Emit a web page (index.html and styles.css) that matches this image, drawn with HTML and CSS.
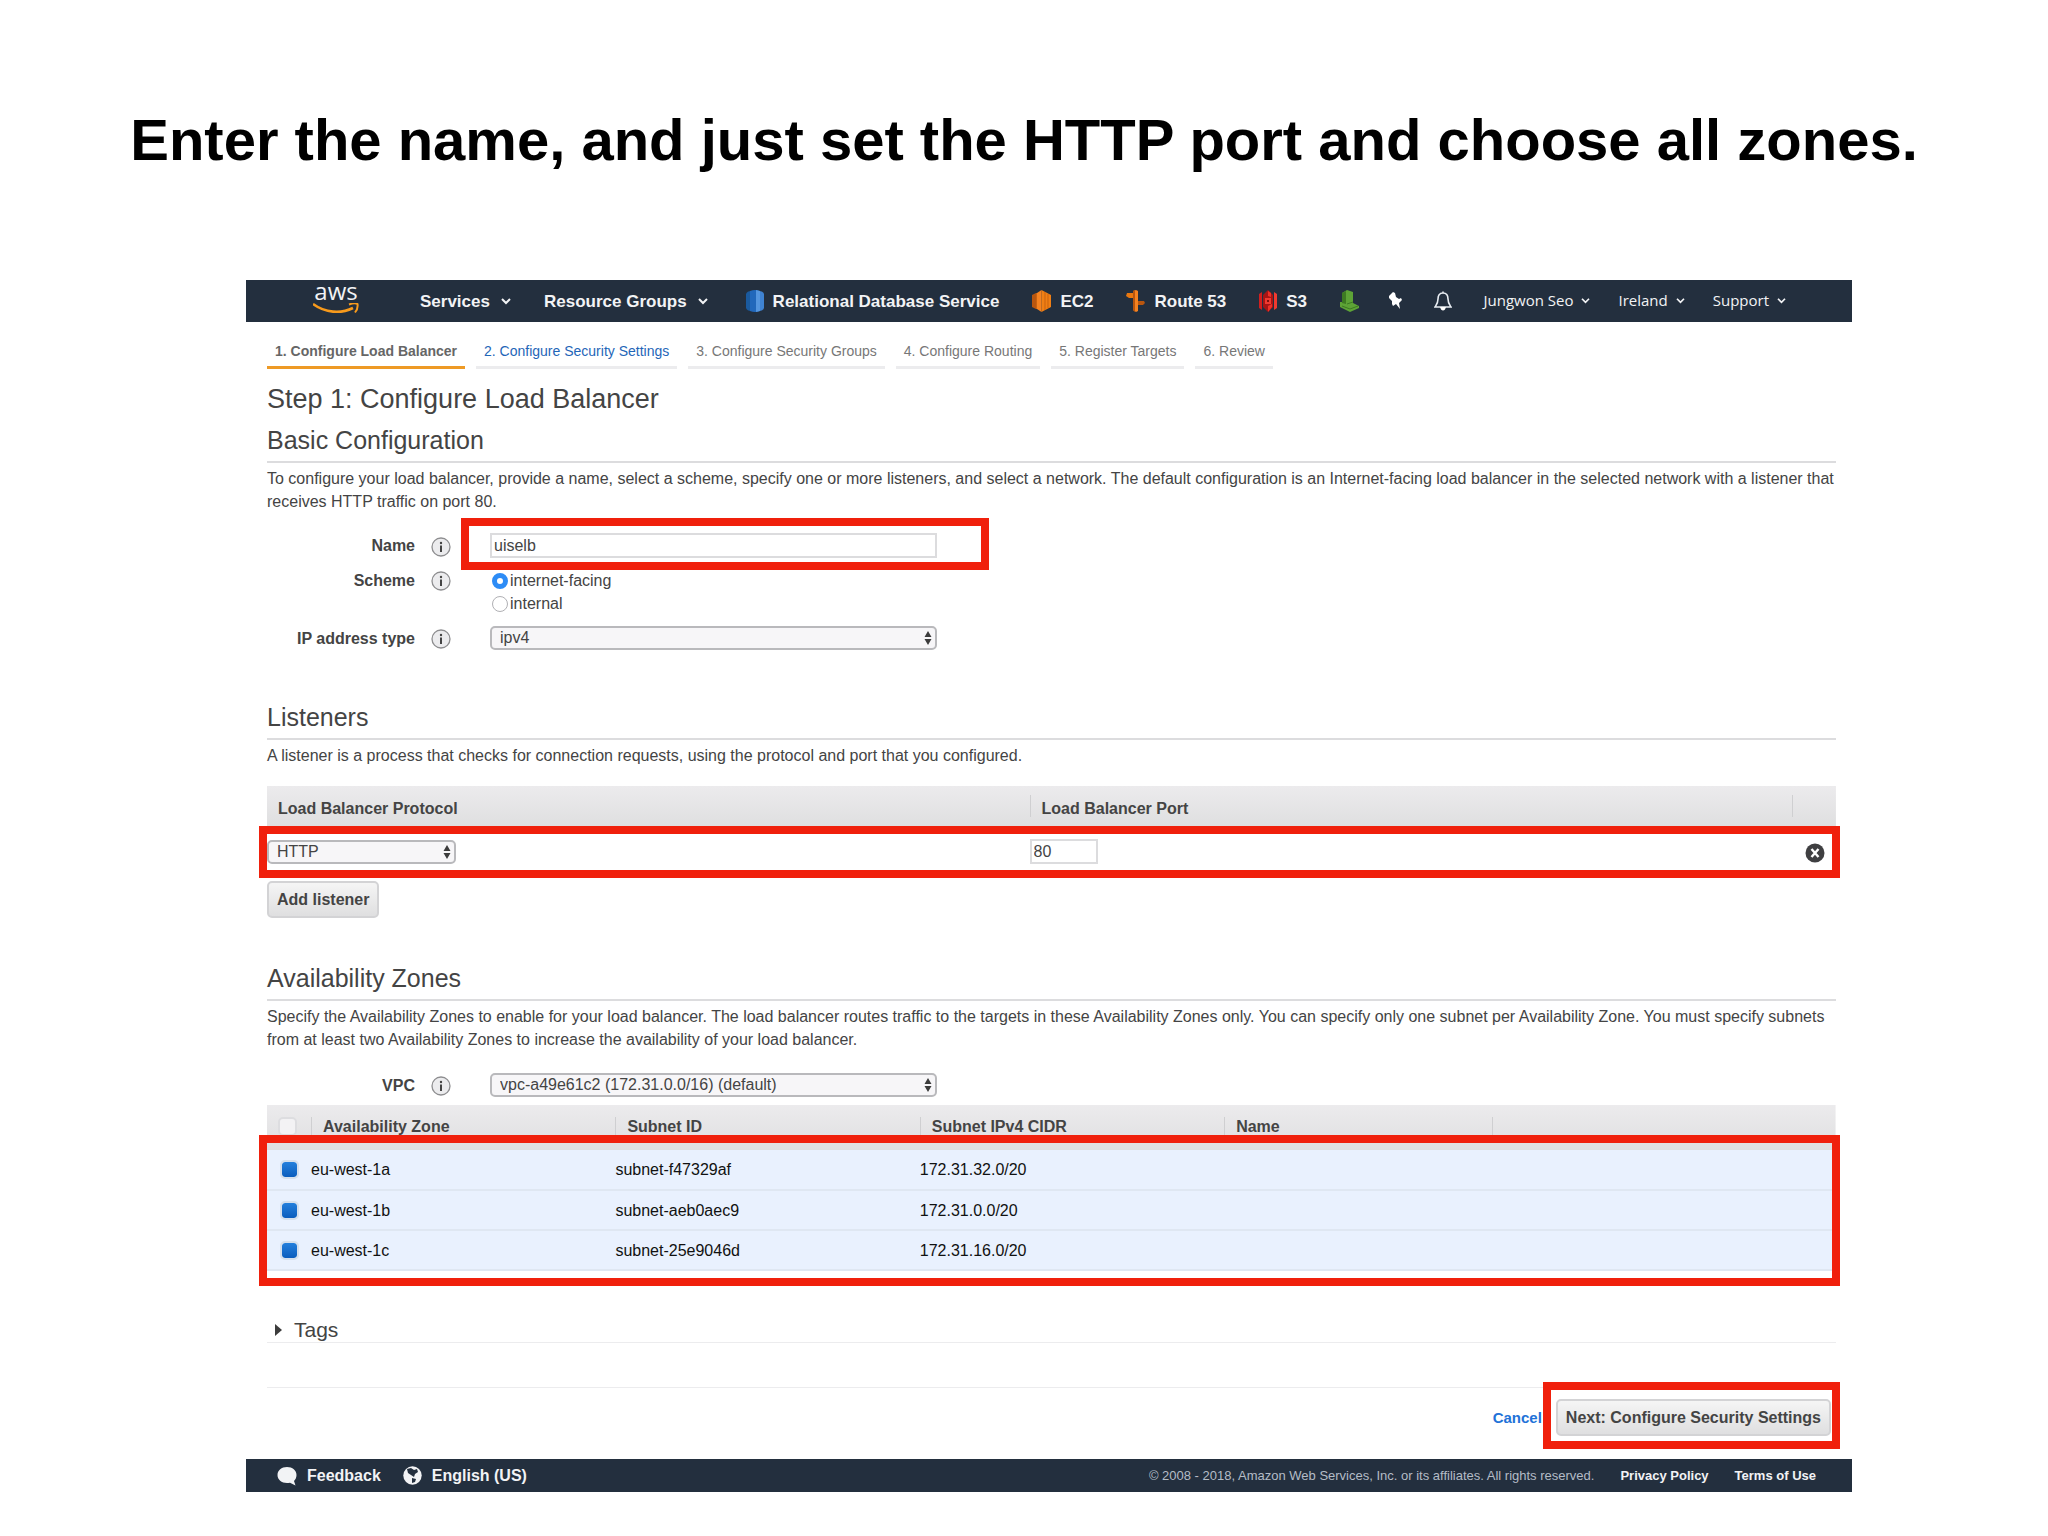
FILE: index.html
```
<!DOCTYPE html>
<html lang="en">
<head>
<meta charset="utf-8">
<title>Configure Load Balancer</title>
<link rel="stylesheet" href="styles.css">
</head>
<body>
<svg class="defs" width="0" height="0" aria-hidden="true">
  <symbol id="chevron" viewBox="0 0 10 8"><path d="M1 2 L5 6 L9 2" fill="none" stroke="currentColor" stroke-width="2"/></symbol>
  <symbol id="updown" viewBox="0 0 8 16"><path d="M4 1 L7.500 7 H.5 Z M4 15 L.5 9 H7.500 Z" fill="#3c3c3c"/></symbol>
  <symbol id="info" viewBox="0 0 20 20"><circle cx="10" cy="10" r="9" fill="#ececee" stroke="#8e8e90" stroke-width="1.300"/><circle cx="10" cy="6" r="1.200" fill="#444"/><path d="M10 8.500 V15" stroke="#444" stroke-width="2"/></symbol>
</svg>

<main class="slide">
  <h1 class="slide-title">Enter the name, and just set the HTTP port and choose all zones.</h1>

  <div class="console">
    <nav class="topbar">
      <a class="logo" href="#"><span class="logo-text">aws</span>
        <svg width="46" height="12" viewBox="0 0 46 12"><path d="M0 1 C12 10 28 11 40 5" fill="none" stroke="#f79a1c" stroke-width="2.600"/><path d="M36 1.500 C40 0 43 0 44.500 1 C45 4 44 7 42 9.500" fill="none" stroke="#f79a1c" stroke-width="2"/></svg>
      </a>
      <div class="menus">
        <a class="menu" href="#">Services <svg class="chev"><use href="#chevron"/></svg></a>
        <a class="menu" href="#">Resource Groups <svg class="chev"><use href="#chevron"/></svg></a>
      </div>
      <div class="shortcuts">
        <a class="shortcut" href="#">
          <svg width="18" height="22" viewBox="0 0 18 22"><path d="M0 4 Q1 1 5 1 V21 Q1 21 0 18 Z" fill="#1a5a9e"/><path d="M18 4 Q17 1 13 1 V21 Q17 21 18 18 Z" fill="#3f83d2"/><path d="M4 1 Q9 -1 14 1 V21 Q9 23 4 21 Z" fill="#2268bb"/><path d="M10 0 L14 1 V21 L10 22 Z" fill="#5596df"/></svg>
          Relational Database Service</a>
        <a class="shortcut" href="#">
          <svg width="19" height="22" viewBox="0 0 19 22"><path d="M0 5 L4 3 V19 L0 17 Z" fill="#b8560f"/><path d="M5 3 L9.500 0 V22 L5 19 Z" fill="#f58220"/><path d="M9.500 0 L19 5 V17 L9.500 22 Z" fill="#f07f14"/><path d="M4.500 3 V19 M13 2 V20 M16 4 V18" stroke="#c9620f"/></svg>
          EC2</a>
        <a class="shortcut" href="#">
          <svg width="19" height="22" viewBox="0 0 19 22"><path d="M7 1 L10 0 L12 1 V21 L10 22 L7 20 Z" fill="#f58220"/><path d="M7 1 L9 0 V22 L7 20 Z" fill="#b8560f"/><path d="M1 3 H7 V8 H3 L0 6 Z" fill="#e8770f"/><path d="M12 11 H18 L19 13 L17 15 H12 Z" fill="#b8560f"/></svg>
          Route 53</a>
        <a class="shortcut" href="#">
          <svg width="18" height="22" viewBox="0 0 18 22"><path d="M0 4 L3 2 V20 L0 18 Z" fill="#d01f1f"/><path d="M18 4 L15 2 V20 L18 18 Z" fill="#f03a30"/><path d="M4 5 L9 0 L14 5 V17 L9 22 L4 17 Z" fill="#a81414"/><path d="M9 1 L12 3 V7 L9 6 Z" fill="#ee3128"/><path d="M6 8 H12 V14 H6 Z" fill="#f03a30"/><path d="M8 10 H10 V12 H8 Z" fill="#7d0f0f"/><path d="M9 16 L13 14 V17 L9 22 Z" fill="#ee3128"/></svg>
          S3</a>
        <a class="shortcut" href="#" aria-label="Service">
          <svg width="19" height="22" viewBox="0 0 19 22"><path d="M2 3 L7 0 L13 2 V13 L19 16 V18 L10 22 L0 17 V12 L2 12 Z" fill="#5da336"/><path d="M2 3 L6 1 V14 L2 13 Z" fill="#3d7a22"/><path d="M7 14 L13 12 M2 16 L10 19 L18 16" stroke="#3d7a22" fill="none"/></svg>
        </a>
      </div>
      <a class="pin" href="#" aria-label="Pin"><svg width="14" height="18" viewBox="0 0 14 18"><path d="M1 4 L5 0 L7 1 L8 5 L11 7 L13 6 L14 8 L11 11 L12 17 L8 12 L5 14 L4 12 L4 9 L1 6 Z" fill="#fff"/></svg></a>
      <a class="bell" href="#" aria-label="Notifications"><svg width="18" height="20" viewBox="0 0 18 20"><path d="M9 0.500 V2 M9 2 C5 2 4 5 4 8 C4 12 3 13 1 16 H17 C15 13 14 12 14 8 C14 5 13 2 9 2 Z" fill="none" stroke="#e8edf2" stroke-width="1.600"/><path d="M6 16 H12 Q11 19.500 9 19.500 Q7 19.500 6 16 Z" fill="#fff"/></svg></a>
      <div class="account">
        <a class="account-link" href="#">Jungwon Seo <svg class="chev-small"><use href="#chevron"/></svg></a>
        <a class="account-link" href="#">Ireland <svg class="chev-small"><use href="#chevron"/></svg></a>
        <a class="account-link" href="#">Support <svg class="chev-small"><use href="#chevron"/></svg></a>
      </div>
    </nav>

    <div class="content">
      <ol class="tabs">
        <li class="tab tab-active">1. Configure Load Balancer</li>
        <li class="tab"><a href="#">2. Configure Security Settings</a></li>
        <li class="tab">3. Configure Security Groups</li>
        <li class="tab">4. Configure Routing</li>
        <li class="tab">5. Register Targets</li>
        <li class="tab">6. Review</li>
      </ol>

      <h2 class="step-title">Step 1: Configure Load Balancer</h2>

      <section class="basic">
        <h3 class="section-title">Basic Configuration</h3>
        <p class="text">To configure your load balancer, provide a name, select a scheme, specify one or more listeners, and select a network. The default configuration is an Internet-facing load balancer in the selected network with a listener that<br>receives HTTP traffic on port 80.</p>
        <div class="form">
          <div class="row">
            <label class="label" for="name">Name</label>
            <svg class="info"><use href="#info"/></svg>
            <input class="input input-name" id="name" type="text" value="uiselb">
            <span class="mark mark-name"></span>
          </div>
          <div class="row row-top">
            <span class="label" id="scheme">Scheme</span>
            <svg class="info"><use href="#info"/></svg>
            <div class="radios" role="radiogroup" aria-labelledby="scheme">
              <label class="radio-label"><input class="radio" type="radio" name="scheme" checked>internet-facing</label>
              <label class="radio-label"><input class="radio" type="radio" name="scheme">internal</label>
            </div>
          </div>
          <div class="row">
            <label class="label" for="iptype">IP address type</label>
            <svg class="info"><use href="#info"/></svg>
            <span class="select-wrap select-long"><select class="select" id="iptype"><option>ipv4</option></select><svg class="updown"><use href="#updown"/></svg></span>
          </div>
        </div>
      </section>

      <section class="listeners">
        <h3 class="section-title">Listeners</h3>
        <p class="text">A listener is a process that checks for connection requests, using the protocol and port that you configured.</p>
        <div class="table-wrap listener-wrap">
          <table class="table listener-table">
            <colgroup><col class="col-protocol"><col class="col-port"><col></colgroup>
            <thead><tr><th>Load Balancer Protocol</th><th>Load Balancer Port</th><th></th></tr></thead>
            <tbody><tr>
              <td><span class="select-wrap select-short"><select class="select" aria-label="Load Balancer Protocol"><option>HTTP</option></select><svg class="updown"><use href="#updown"/></svg></span></td>
              <td><input class="input input-port" type="text" value="80" aria-label="Load Balancer Port"></td>
              <td><button class="remove" type="button" aria-label="Remove listener"><svg width="20" height="20" viewBox="0 0 20 20"><circle cx="10" cy="10" r="9.500" fill="#3f3f41"/><path d="M6.500 6 L13.500 14 M13.500 6 L6.500 14" stroke="#fff" stroke-width="2.400"/></svg></button></td>
            </tr></tbody>
          </table>
          <span class="mark mark-listener"></span>
        </div>
        <button class="button" type="button">Add listener</button>
      </section>

      <section class="zones">
        <h3 class="section-title">Availability Zones</h3>
        <p class="text">Specify the Availability Zones to enable for your load balancer. The load balancer routes traffic to the targets in these Availability Zones only. You can specify only one subnet per Availability Zone. You must specify subnets<br>from at least two Availability Zones to increase the availability of your load balancer.</p>
        <div class="row row-vpc">
          <label class="label" for="vpc">VPC</label>
          <svg class="info"><use href="#info"/></svg>
          <span class="select-wrap select-long"><select class="select" id="vpc"><option>vpc-a49e61c2 (172.31.0.0/16) (default)</option></select><svg class="updown"><use href="#updown"/></svg></span>
        </div>
        <div class="table-wrap">
          <table class="table zone-table">
            <colgroup><col class="col-check"><col class="col-zone"><col class="col-zone"><col class="col-zone"><col class="col-name"><col></colgroup>
            <thead><tr><th><input class="check" type="checkbox" aria-label="Select all"></th><th>Availability Zone</th><th>Subnet ID</th><th>Subnet IPv4 CIDR</th><th>Name</th><th></th></tr></thead>
            <tbody>
              <tr><td><input class="check" type="checkbox" checked aria-label="eu-west-1a"></td><td>eu-west-1a</td><td>subnet-f47329af</td><td>172.31.32.0/20</td><td></td><td></td></tr>
              <tr><td><input class="check" type="checkbox" checked aria-label="eu-west-1b"></td><td>eu-west-1b</td><td>subnet-aeb0aec9</td><td>172.31.0.0/20</td><td></td><td></td></tr>
              <tr><td><input class="check" type="checkbox" checked aria-label="eu-west-1c"></td><td>eu-west-1c</td><td>subnet-25e9046d</td><td>172.31.16.0/20</td><td></td><td></td></tr>
            </tbody>
          </table>
          <span class="mark mark-zones"></span>
        </div>
      </section>

      <h3 class="tags"><svg width="7" height="12" viewBox="0 0 7 12"><path d="M0 0 L7 6 L0 12 Z" fill="#3c3c3c"/></svg>Tags</h3>

      <div class="actions">
        <a class="cancel" href="#">Cancel</a>
        <span class="next"><button class="button" type="button">Next: Configure Security Settings</button><span class="mark mark-next"></span></span>
      </div>
    </div>

    <footer class="footer">
      <a class="footer-link" href="#"><svg width="20" height="20" viewBox="0 0 20 20"><path d="M10 1 C15.500 1 19.500 4.500 19.500 9 C19.500 11.500 18.500 13.500 17 15 L18.500 19.500 L13 16.700 C12 17 11 17 10 17 C4.500 17 .5 13.500 .5 9 C.5 4.500 4.500 1 10 1 Z" fill="#f2f3f5"/></svg>Feedback</a>
      <a class="footer-link" href="#"><svg width="19" height="19" viewBox="0 0 19 19"><circle cx="9.500" cy="9.500" r="9.200" fill="#f2f3f5"/><path d="M4 3 L8 2 L11 4 L14 3 L15 6 L12 8 L11 11 L8 9 L5 7 Z M9 12 L13 13 L12 16 L9 17 Z" fill="#232f3e"/></svg>English (US)</a>
      <span class="copyright">© 2008 - 2018, Amazon Web Services, Inc. or its affiliates. All rights reserved.</span>
      <a class="legal" href="#">Privacy Policy</a>
      <a class="legal" href="#">Terms of Use</a>
    </footer>
  </div>
</main>
</body>
</html>
```
FILE: styles.css
```
* { box-sizing: border-box; }

body {
  margin: 0;
  background: #fff;
  color: #444;
  font: 16px/23px "Liberation Sans", Arial, sans-serif;
}

a { color: inherit; text-decoration: none; }
h1, h2, h3, p, ol { margin: 0; padding: 0; }
svg { display: block; flex: none; }
.defs { position: absolute; }

.slide { padding: 105px 0 44px; }

.slide-title {
  margin-bottom: 105px;
  color: #000;
  font-size: 58px;
  line-height: 70px;
  text-align: center;
}

.console { margin: 0 196px 0 246px; }

/* Top navigation */
.topbar {
  display: flex;
  align-items: center;
  height: 42px;
  padding: 0 66px 0 67px;
  background: #232f3e;
  color: #f2f3f5;
  font-size: 17px;
  font-weight: bold;
  white-space: nowrap;
}

.logo { width: 46px; margin-right: 61px; padding-bottom: 6px; }
.logo-text {
  display: block;
  height: 21px;
  font: 24px/18px "Open Sans", sans-serif;
  text-align: center;
}

.menus { display: flex; gap: 33px; margin-right: 38px; }
.menu { display: flex; align-items: center; gap: 11px; }
.chev { width: 10px; height: 8px; }

.shortcuts { display: flex; gap: 33px; }
.shortcut { display: flex; align-items: center; gap: 9px; }
.pin { margin-left: 29px; }
.bell { margin-left: 32px; }

.account {
  display: flex;
  gap: 28px;
  margin-left: auto;
  padding-bottom: 2px;
  font: 15px/20px "Open Sans", sans-serif;
}
.account-link { display: flex; align-items: center; gap: 8px; }
.chev-small { width: 9px; height: 7px; }

/* Content */
.content { padding: 19px 16px 23px 21px; }

.tabs { display: flex; gap: 11px; list-style: none; }
.tab {
  padding: 0 8px 5px;
  border-bottom: 3px solid #ececee;
  color: #777;
  font-size: 14px;
  line-height: 20px;
  white-space: nowrap;
}
.tab a { color: #1f66b8; }
.tab-active { border-color: #ee9a25; color: #666; font-weight: bold; }

.step-title {
  margin: 13px 0 8px;
  font-size: 27px;
  font-weight: normal;
  line-height: 34px;
}

.section-title {
  margin-bottom: 4px;
  padding-bottom: 5px;
  border-bottom: 2px solid #dcdcde;
  font-size: 25px;
  font-weight: normal;
  line-height: 32px;
}

.text { white-space: nowrap; }

/* Form rows */
.form { display: grid; gap: 11px; margin-top: 20px; }
.row { display: flex; align-items: center; position: relative; }
.row-top { align-items: flex-start; }
.row-vpc { margin: 22px 0 8px; }
.label { width: 148px; font-weight: bold; text-align: right; }
.info { width: 20px; height: 20px; margin: 2px 39px 0 16px; }

.input {
  height: 25px;
  padding: 0 2px;
  border: 2px solid #dcdcde;
  background: #fff;
  color: #444;
  font: inherit;
}
.input-name { width: 447px; }
.input-port { display: block; width: 68px; }

.radios { display: grid; }
.radio-label { display: flex; align-items: center; gap: 2px; }
.radio {
  appearance: none;
  width: 16px;
  height: 16px;
  margin: 0 0 0 2px;
  border: 1px solid #b0b0b4;
  border-radius: 50%;
  background: #fff;
}
.radio:checked { border: 5px solid #2d8cf6; }

.select-wrap { display: grid; align-items: center; }
.select-wrap > * { grid-area: 1 / 1; }
.select-long { width: 447px; }
.select-short { width: 189px; }
.select {
  appearance: none;
  width: 100%;
  height: 24px;
  padding: 0 24px 0 8px;
  border: 2px solid #b9b9bc;
  border-radius: 5px;
  background: #f7f6f8;
  color: #444;
  font: inherit;
  line-height: 20px;
}
.updown { justify-self: end; width: 8px; height: 16px; margin-right: 5px; pointer-events: none; }

.button {
  display: block;
  height: 37px;
  padding: 0 8px;
  border: 2px solid #d3d3d5;
  border-radius: 5px;
  background: linear-gradient(#f5f5f5, #dfdfe0);
  color: #444;
  font: bold 16px/23px "Liberation Sans", Arial, sans-serif;
}

/* Tables */
.zones { margin-top: 44px; }
.listeners { margin-top: 51px; }

.table-wrap { position: relative; }
.listener-wrap { margin: 19px 0 4px; }
.table { width: 100%; border-collapse: collapse; table-layout: fixed; }
.table thead { background: linear-gradient(#ecebed, #dfdfe0); }
.table th {
  height: 45px;
  padding: 0 12px 2px;
  background: linear-gradient(#cfcfd1, #cfcfd1) left center / 1px 22px no-repeat;
  text-align: left;
}
.table th:first-child { padding-left: 11px; background: none; }
.table td { padding: 0; }

.listener-table th { height: 40px; padding-top: 4px; padding-bottom: 0; }
.listener-table td { height: 51px; }
.col-protocol, .col-port { width: 48.6%; }

.remove { display: block; margin: 2px 0 0 13px; padding: 0; border: 0; background: none; }

.zone-table td {
  height: 40px;
  border-bottom: 2px solid #dfe7f2;
  background: #e9f1fe;
  color: #111;
}
.col-check { width: 44px; }
.col-zone { width: 19.4%; }
.col-name { width: 17.1%; }

.check {
  appearance: none;
  display: block;
  width: 19px;
  height: 19px;
  margin: 0;
  border: 2px solid #dddde0;
  border-radius: 5px;
  background: #f3f2f4;
}
.zone-table td .check { margin-left: 13px; }
.check:checked {
  border-color: #d5e0ec;
  background: linear-gradient(#2480dc, #0a5dbd) padding-box;
}

/* Red callout frames laid over the console */
.mark {
  position: absolute;
  border: 8px solid #f0200c;
  pointer-events: none;
}
.mark-name { top: -15px; bottom: -12px; left: 194px; width: 528px; }
.mark-listener { inset: 40px -4px -1px -8px; }
.mark-zones { inset: 30px -4px -15px -8px; }
.mark-next { inset: -17px -9px -13px -13px; }

.tags {
  display: flex;
  align-items: center;
  gap: 12px;
  margin-top: 46px;
  padding-left: 8px;
  border-bottom: 1px solid #ececee;
  font-size: 21px;
  font-weight: normal;
  line-height: 25px;
}

.actions {
  display: flex;
  align-items: center;
  justify-content: flex-end;
  gap: 14px;
  margin-top: 44px;
  padding: 11px 5px 0 0;
  border-top: 1px solid #ececee;
}
.cancel { color: #2272d8; font-size: 15px; font-weight: bold; }
.next { position: relative; }

/* Footer */
.footer {
  display: flex;
  align-items: center;
  height: 33px;
  padding: 0 36px 0 31px;
  background: #232f3e;
  color: #f2f3f5;
  white-space: nowrap;
}
.footer-link { display: flex; align-items: center; gap: 10px; margin-right: 22px; font-weight: bold; }
.copyright { margin-left: auto; color: #b4bcc6; font-size: 13px; }
.legal { margin-left: 26px; font-size: 13px; font-weight: bold; }
```
